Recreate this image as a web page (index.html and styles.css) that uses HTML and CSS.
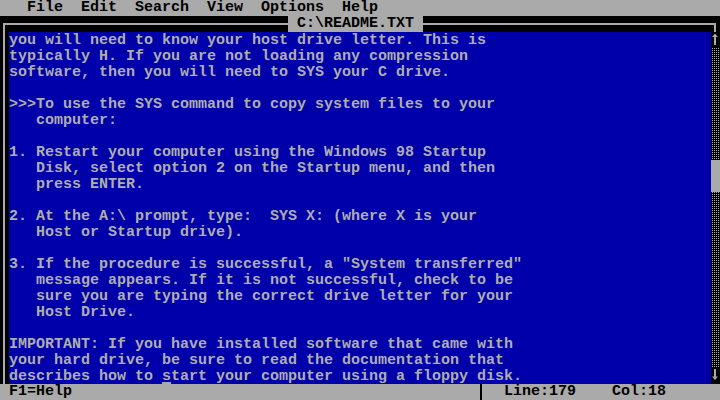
FILE: index.html
```html
<!DOCTYPE html>
<html lang="en">
<head>
<meta charset="utf-8">
<title>C:\README.TXT - MS-DOS Editor</title>
<link rel="stylesheet" href="styles.css">
</head>
<body>
<div class="screen">
  <div class="menubar">
    <span>File</span><span>Edit</span><span>Search</span><span>View</span><span>Options</span><span>Help</span>
  </div>
  <div class="titlerow">
    <div class="seg seg-left"><div class="edge edge-left"></div></div>
    <div class="title">C:\README.TXT</div>
    <div class="seg seg-right"><div class="edge edge-right"></div></div>
  </div>
  <div class="body">
    <div class="frame-left"></div>
    <pre class="text">you will need to know your host drive letter. This is
typically H. If you are not loading any compression
software, then you will need to SYS your C drive.

&gt;&gt;&gt;To use the SYS command to copy system files to your
   computer:

1. Restart your computer using the Windows 98 Startup
   Disk, select option 2 on the Startup menu, and then
   press ENTER.

2. At the A:\ prompt, type:  SYS X: (where X is your
   Host or Startup drive).

3. If the procedure is successful, a "System transferred"
   message appears. If it is not successful, check to be
   sure you are typing the correct drive letter for your
   Host Drive.

IMPORTANT: If you have installed software that came with
your hard drive, be sure to read the documentation that
describes how to <span class="cursor">s</span>tart your computer using a floppy disk.</pre>
    <div class="scrollbar">
      <div class="arrow"><svg width="9" height="16" viewBox="0 0 9 16"><rect x="3" y="4" width="2" height="9" fill="#aaa"/><polygon points="4,1.5 7,5 1,5" fill="#aaa"/></svg></div>
      <div class="track"><div class="thumb"></div></div>
      <div class="arrow"><svg width="9" height="16" viewBox="0 0 9 16"><rect x="3" y="1" width="2" height="9" fill="#aaa"/><polygon points="1,8.5 7,8.5 4,12" fill="#aaa"/></svg></div>
    </div>
  </div>
  <div class="statusbar">
    <div class="help">F1=Help</div>
    <div class="divider"></div>
    <div class="pos"><span>Line:179</span><span>Col:18</span></div>
  </div>
</div>
</body>
</html>
```
FILE: styles.css
```css
html, body {
  margin: 0;
  padding: 0;
  background: #000;
}

.screen {
  width: 720px;
  height: 400px;
  display: flex;
  flex-direction: column;
  background: #000;
  font-family: "Liberation Mono", "DejaVu Sans Mono", monospace;
  font-size: 15px;
  line-height: 16px;
  font-weight: bold;
  overflow: hidden;
}

.menubar {
  height: 16px;
  background: #aaa;
  color: #000;
  display: flex;
  gap: 18px;
  padding-left: 27px;
  white-space: pre;
}

.titlerow {
  height: 16px;
  display: grid;
  grid-template-columns: 288px 135px 1fr;
}

.seg {
  padding-top: 7px;
  box-sizing: border-box;
}

.seg-left {
  padding-left: 3px;
}

.seg-right {
  padding-right: 4px;
}

.edge {
  height: 7px;
  border-top: 2px solid #aaa;
}

.edge-left {
  border-left: 2px solid #aaa;
}

.edge-right {
  border-right: 2px solid #aaa;
}

.title {
  background: #aaa;
  color: #000;
  padding: 0 9px;
  white-space: pre;
}

.body {
  height: 352px;
  display: flex;
}

.frame-left {
  width: 9px;
  flex: none;
  background: linear-gradient(to right, #000 3px, #aaa 3px, #aaa 5px, #000 5px);
}

.text {
  margin: 0;
  padding-top: 1px;
  width: 702px;
  flex: none;
  background: #0000aa;
  color: #aeaeae;
  font: inherit;
  white-space: pre;
  overflow: hidden;
}

.cursor {
  text-decoration-line: underline;
  text-decoration-thickness: 2px;
  text-underline-offset: 2px;
  text-decoration-color: #aaa;
  text-decoration-skip-ink: none;
}

.scrollbar {
  width: 9px;
  flex: none;
  display: flex;
  flex-direction: column;
  background: #000;
}

.arrow {
  height: 16px;
  flex: none;
}

.arrow svg {
  display: block;
}

.track {
  flex: 1;
  padding-top: 112px;
  box-sizing: border-box;
  background-color: #000;
  background-image: conic-gradient(#aaa 25%, #000 0);
  background-size: 2px 2px;
}

.thumb {
  height: 32px;
  background: #aaa;
}

.statusbar {
  height: 16px;
  background: #aaa;
  color: #000;
  display: grid;
  grid-template-columns: 477px 9px 1fr;
  white-space: pre;
}

.help {
  padding-left: 9px;
}

.divider {
  background: linear-gradient(to right, transparent 3px, #000 3px, #000 5px, transparent 5px);
}

.pos {
  display: flex;
  gap: 36px;
  padding-left: 18px;
}
```
